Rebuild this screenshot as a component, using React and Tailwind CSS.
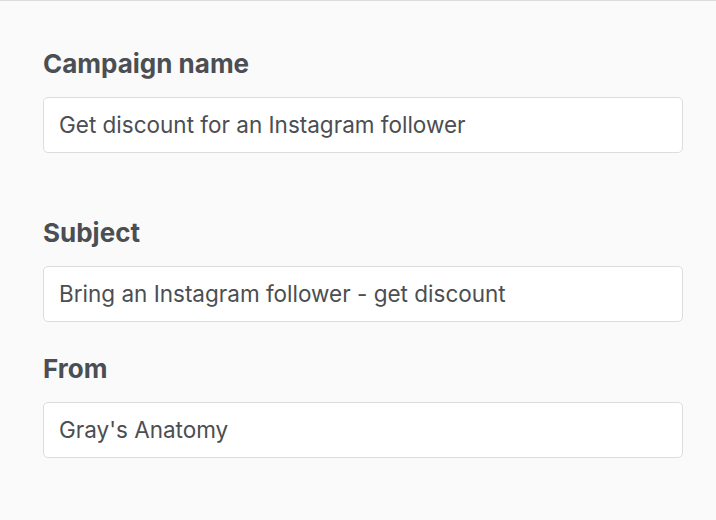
export default function App() {
  const fields = [
    { label: "Campaign name", value: "Get discount for an Instagram follower", gap: "mb-[63px]" },
    { label: "Subject", value: "Bring an Instagram follower - get discount", gap: "mb-[30px]" },
    { label: "From", value: "Gray's Anatomy", gap: "" },
  ];

  return (
    <div
      className="min-h-[520px] w-[716px] bg-[#fafafa] border-t border-[#dcdcdc]"
      style={{ fontFamily: "Inter, Lato, sans-serif" }}
    >
      <div className="pl-[43px] pr-[33px] pt-[46px]">
        {fields.map((f) => (
          <div key={f.label} className={f.gap}>
            <label className="block text-[26px] leading-[34px] font-bold text-[#4b4e52]">
              {f.label}
            </label>
            <div className="mt-[16px] h-[56px] flex items-center bg-white border border-[#dddddd] rounded-[5px] px-[15px]">
              <span className="text-[22.5px] text-[#4b4e52]">{f.value}</span>
            </div>
          </div>
        ))}
      </div>
    </div>
  );
}
